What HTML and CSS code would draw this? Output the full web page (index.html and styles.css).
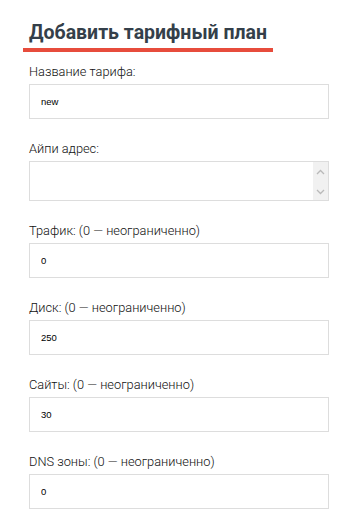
FILE: index.html
```html
<!DOCTYPE html>
<html lang="ru">
<head>
    <meta charset="UTF-8">
    <meta name="viewport" content="width=device-width, initial-scale=1.0">
    <title>Добавить тарифный план</title>
    <link rel="stylesheet" href="styles.css">
</head>
<body>

    <div class="container">
        <h2 class="page-title">Добавить тарифный план</h2>
        <form id="planForm" class="plan-form">
            <!-- Основные поля -->
            <div class="field">
                <label for="planName">Название тарифа:</label>
                <input type="text" id="planName" name="planName" value="new">
            </div>

            <div class="field">
                <label for="ipAddress">Айпи адрес:</label>
                <div class="textarea-wrap">
                    <textarea id="ipAddress" name="ipAddress"></textarea>
                    <div class="scrollbar">
                        <svg width="9" height="6" viewBox="0 0 9 6"><path d="M1 5 L4.5 1.5 L8 5" fill="none" stroke="#b9b9b9" stroke-width="1.3"/></svg>
                        <svg width="9" height="6" viewBox="0 0 9 6"><path d="M1 1 L4.5 4.5 L8 1" fill="none" stroke="#b9b9b9" stroke-width="1.3"/></svg>
                    </div>
                </div>
            </div>

            <!-- Лимиты -->
            <div class="field">
                <label for="traffic">Трафик: (0 — неограниченно)</label>
                <input type="text" id="traffic" name="traffic" value="0">
            </div>

            <div class="field">
                <label for="disk">Диск: (0 — неограниченно)</label>
                <input type="text" id="disk" name="disk" value="250">
            </div>

            <div class="field">
                <label for="sites">Сайты: (0 — неограниченно)</label>
                <input type="text" id="sites" name="sites" value="30">
            </div>

            <div class="field">
                <label for="dnsZones">DNS зоны: (0 — неограниченно)</label>
                <input type="text" id="dnsZones" name="dnsZones" value="0">
            </div>
        </form>
    </div>

</body>
</html>
```

FILE: styles.css
```css
body {
    font-family: Roboto, "Liberation Sans", Arial, sans-serif;
    margin: 0;
    background-color: #fff;
}
.container {
    padding-left: 23px;
}
.page-title {
    display: inline-block;
    margin: 21px 0 11px;
    padding: 0 6px 3px;
    font-size: 19.5px;
    font-weight: 700;
    line-height: 24px;
    color: #343f4a;
    border-bottom: 4px solid #e74c3c;
}
.plan-form {
    width: 300px;
    padding-left: 6px;
}
.field {
    margin-bottom: 21px;
}
label {
    display: block;
    margin-bottom: 4px;
    font-size: 12.8px;
    font-weight: 300;
    line-height: 17px;
    color: #111;
}
input, textarea {
    display: block;
    box-sizing: border-box;
    width: 300px;
    height: 35px;
    padding: 0 11px;
    margin: 0;
    border: 1px solid #ddd;
    font-family: "Liberation Sans", Arial, sans-serif;
    font-size: 9.5px;
    color: #000;
    background-color: #fff;
    outline: none;
}
.textarea-wrap {
    position: relative;
}
textarea {
    height: 40px;
    resize: none;
    overflow: hidden;
}
.scrollbar {
    position: absolute;
    top: 1px;
    right: 1px;
    bottom: 1px;
    width: 15px;
    background-color: #f1f1f1;
    display: flex;
    flex-direction: column;
    justify-content: space-between;
    align-items: center;
    padding: 7px 0 5px;
    box-sizing: border-box;
}
.scrollbar svg {
    display: block;
}
```
